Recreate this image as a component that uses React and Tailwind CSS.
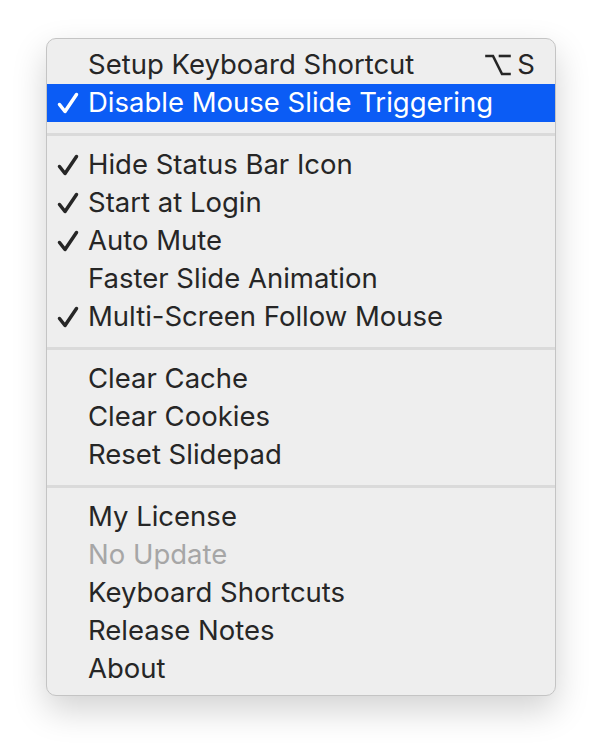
import React from 'react';

const groups = [
  [
    { label: 'Setup Keyboard Shortcut', shortcut: true },
    { label: 'Disable Mouse Slide Triggering', checked: true, active: true },
  ],
  [
    { label: 'Hide Status Bar Icon', checked: true },
    { label: 'Start at Login', checked: true },
    { label: 'Auto Mute', checked: true },
    { label: 'Faster Slide Animation' },
    { label: 'Multi-Screen Follow Mouse', checked: true },
  ],
  [
    { label: 'Clear Cache' },
    { label: 'Clear Cookies' },
    { label: 'Reset Slidepad' },
  ],
  [
    { label: 'My License' },
    { label: 'No Update', disabled: true },
    { label: 'Keyboard Shortcuts' },
    { label: 'Release Notes' },
    { label: 'About' },
  ],
];

function Check() {
  return (
    <svg width="22" height="22" viewBox="0 0 22 22" fill="none" stroke="currentColor" strokeWidth="3.5" strokeLinecap="round" strokeLinejoin="round">
      <path d="M2.5 12.5 L8 19.5 L19.5 2.5" />
    </svg>
  );
}

function OptionKey() {
  return (
    <svg width="26" height="22" viewBox="0 0 26 22" fill="none" stroke="currentColor" strokeWidth="2.6" strokeLinecap="square">
      <path d="M1.5 2 H8 L17 20 H24.5" />
      <path d="M15 2 H24.5" />
    </svg>
  );
}

function MenuItem({ item }) {
  const color = item.active
    ? 'bg-[#0b5cf5] text-white'
    : item.disabled
      ? 'text-[#a6a6a6]'
      : 'text-[#262626]';
  return (
    <div className={`flex h-[38px] items-center pr-[20px] ${color}`}>
      <div className="w-[41px] pl-[10px]">
        {item.checked && <Check />}
      </div>
      <span className="flex-1 whitespace-nowrap">{item.label}</span>
      {item.shortcut && (
        <span className="flex items-center gap-[6px]">
          <OptionKey />
          <span>S</span>
        </span>
      )}
    </div>
  );
}

export default function App() {
  return (
    <div className="min-h-screen bg-white pt-[38px] pl-[46px]">
      <div
        className="w-[510px] rounded-[10px] border border-[#c4c4c4] bg-[#eeeeee] py-[7px] text-[27.5px] leading-none shadow-[0_14px_34px_rgba(0,0,0,0.18)]"
        style={{ fontFamily: 'Inter, "Liberation Sans", sans-serif' }}
      >
        {groups.map((group, gi) => (
          <div key={gi}>
            {gi > 0 && (
              <div className="pt-[11px] pb-[10px]">
                <div className="h-[3px] bg-[#dadada]" />
              </div>
            )}
            {group.map((item) => (
              <MenuItem key={item.label} item={item} />
            ))}
          </div>
        ))}
      </div>
    </div>
  );
}
